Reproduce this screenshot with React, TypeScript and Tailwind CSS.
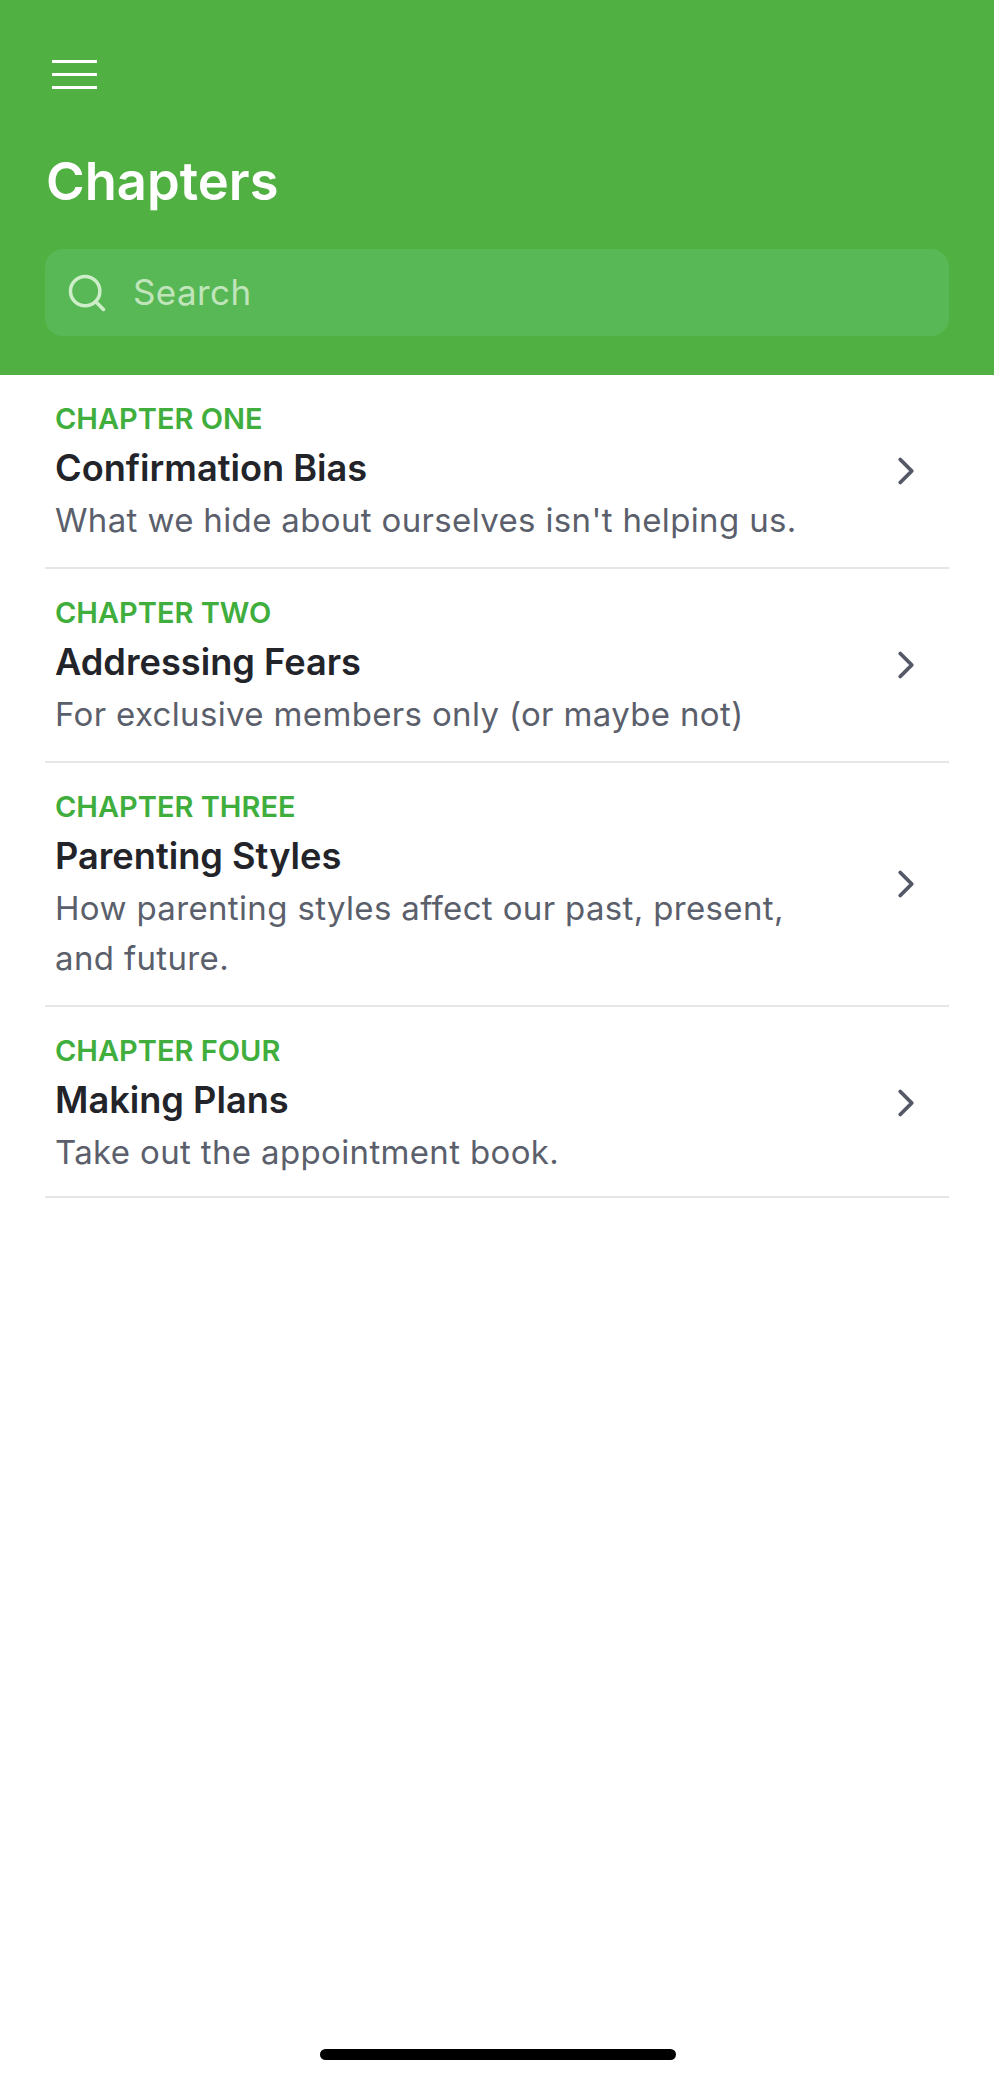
import React from "react";
import { ChevronRight, Search } from "lucide-react";

const CHAPTERS = [
  { label: "CHAPTER ONE", title: "Confirmation Bias", desc: ["What we hide about ourselves isn't helping us."] },
  { label: "CHAPTER TWO", title: "Addressing Fears", desc: ["For exclusive members only (or maybe not)"] },
  { label: "CHAPTER THREE", title: "Parenting Styles", desc: ["How parenting styles affect our past, present,", "and future."] },
  { label: "CHAPTER FOUR", title: "Making Plans", desc: ["Take out the appointment book."] },
];

export default function App() {
  return (
    <div className="relative w-[994px] h-[2080px] bg-white overflow-hidden font-['Inter',sans-serif]">
      {/* Header */}
      <div className="h-[375px] bg-[#50b041] px-[45px] pt-[60px]">
        <div className="flex flex-col gap-[10px] w-[45px] ml-[7px]">
          <div className="h-[3px] bg-white" />
          <div className="h-[3px] bg-white" />
          <div className="h-[3px] bg-white" />
        </div>
        <h1 className="mt-[61px] ml-[1px] text-[52.5px] leading-[62px] font-semibold text-white">Chapters</h1>
        <div className="mt-[37px] h-[87px] rounded-[18px] bg-[#58b855] flex items-center pl-[20px]">
          <Search className="w-[44px] h-[44px] text-[#cdeec8]" strokeWidth={1.9} />
          <span className="ml-[24px] text-[35px] text-[#c0e5bb] tracking-[0.4px]">Search</span>
        </div>
      </div>

      {/* Chapter list */}
      <div className="px-[45px]">
        {CHAPTERS.map((c) => (
          <div key={c.label} className="flex items-center border-b-2 border-[#e6e6e6] pl-[10px] pr-[20px] pt-[23px] pb-[22px] last:pb-[19px]">
            <div className="flex-1">
              <div className="text-[29px] leading-[42px] font-semibold text-[#40ae3c]">{c.label}</div>
              <div className="mt-[6px] mb-[5px] text-[36.2px] leading-[44px] font-semibold text-[#22242a]">{c.title}</div>
              {c.desc.map((line) => (
                <div key={line} className="text-[33px] leading-[50px] text-[#5b5f6c] tracking-[0.35px]">{line}</div>
              ))}
            </div>
            <ChevronRight className="w-[46px] h-[46px] text-[#555866] -mt-[2px]" strokeWidth={2} />
          </div>
        ))}
      </div>

      {/* Home indicator */}
      <div className="absolute left-[320px] top-[2049px] w-[356px] h-[11px] rounded-full bg-black" />
    </div>
  );
}
